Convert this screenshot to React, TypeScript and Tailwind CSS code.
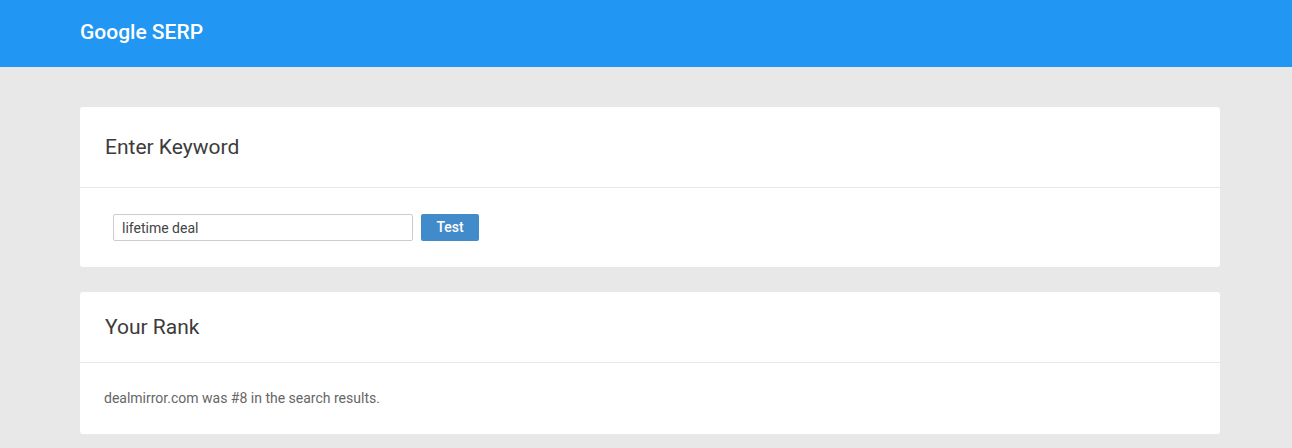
export default function App() {
  return (
    <div className="min-h-[448px] bg-[#e8e8e8]" style={{ fontFamily: "Roboto, 'Liberation Sans', sans-serif" }}>
      <div className="h-[67px] bg-[#2196f3] flex items-center px-[80px] pb-[2px]">
        <span className="text-white text-[21px] font-medium">Google SERP</span>
      </div>
      <div className="pl-[80px] pr-[72px] pt-[40px] flex flex-col gap-[25px]">
        <div className="bg-white rounded-[3px]">
          <div className="h-[81px] flex items-center px-[25px] pt-[2px] border-b border-[#e8e8e8]">
            <span className="text-[21px] text-[#3c3c3c]">Enter Keyword</span>
          </div>
          <div className="h-[79px] flex items-center pl-[33px] gap-[8px]">
            <input
              className="w-[300px] h-[27px] border border-[#cccccc] rounded-[2px] px-[8px] text-[14px] text-[#444] outline-none"
              defaultValue="lifetime deal"
            />
            <button className="w-[58px] h-[27px] bg-[#428bca] rounded-[2px] text-white text-[14px] font-medium">
              Test
            </button>
          </div>
        </div>
        <div className="bg-white rounded-[3px]">
          <div className="h-[71px] flex items-center px-[25px] pt-[2px] border-b border-[#e8e8e8]">
            <span className="text-[21px] text-[#3c3c3c]">Your Rank</span>
          </div>
          <div className="h-[71px] flex items-center px-[24px]">
            <span className="text-[14px] text-[#666]">dealmirror.com was #8 in the search results.</span>
          </div>
        </div>
      </div>
    </div>
  );
}
